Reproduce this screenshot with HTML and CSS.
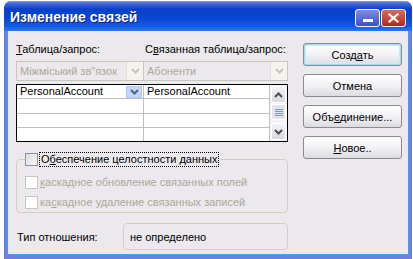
FILE: index.html
```html
<!DOCTYPE html>
<html lang="ru">
<head>
  <meta charset="UTF-8" />
  <title>Изменение связей</title>
  <link rel="stylesheet" href="styles.css">
</head>
<body>
  <div class="window">
    <div class="titlebar">
      <span class="title">Изменение связей</span>
      <div class="caption-btns">
        <span class="cap-btn cap-min"><span class="min-bar"></span></span>
        <span class="cap-btn cap-close">
          <svg width="11" height="10" viewBox="0 0 11 10"><path d="M1.5 1.5 L9.5 8.5 M9.5 1.5 L1.5 8.5" stroke="#fff" stroke-width="2.2" stroke-linecap="square"/></svg>
        </span>
      </div>
    </div>

    <div class="client">
      <div class="main">
        <div class="labels">
          <span class="lbl lbl-left"><u>Т</u>аблица/запрос:</span>
          <span class="lbl">С<u>в</u>язанная таблица/запрос:</span>
        </div>

        <div class="combos">
          <div class="combo combo-left">
            <span class="combo-text">Міжміський зв"язок</span>
            <span class="combo-btn">
              <svg width="9" height="6" viewBox="0 0 9 6"><path d="M1 1 L4.5 4.5 L8 1" fill="none" stroke="#c5c3b8" stroke-width="2"/></svg>
            </span>
          </div>
          <div class="combo combo-right">
            <span class="combo-text">Абоненти</span>
            <span class="combo-btn">
              <svg width="9" height="6" viewBox="0 0 9 6"><path d="M1 1 L4.5 4.5 L8 1" fill="none" stroke="#c5c3b8" stroke-width="2"/></svg>
            </span>
          </div>
        </div>

        <div class="grid">
          <div class="cells">
            <div class="cell cell-active">PersonalAccount
              <span class="cell-btn">
                <svg width="9" height="6" viewBox="0 0 9 6"><path d="M1 1 L4.5 4.5 L8 1" fill="none" stroke="#4d6185" stroke-width="2"/></svg>
              </span>
            </div>
            <div class="cell">PersonalAccount</div>
            <div class="cell"></div>
            <div class="cell"></div>
            <div class="cell"></div>
            <div class="cell"></div>
            <div class="cell"></div>
            <div class="cell"></div>
          </div>
          <div class="scrollbar">
            <span class="sb-btn">
              <svg width="9" height="6" viewBox="0 0 9 6"><path d="M1 5 L4.5 1.5 L8 5" fill="none" stroke="#4d4d4d" stroke-width="2"/></svg>
            </span>
            <span class="sb-thumb"><span class="grip"></span></span>
            <span class="sb-track"></span>
            <span class="sb-btn">
              <svg width="9" height="6" viewBox="0 0 9 6"><path d="M1 1 L4.5 4.5 L8 1" fill="none" stroke="#4d4d4d" stroke-width="2"/></svg>
            </span>
          </div>
        </div>

        <fieldset class="group">
          <legend class="check check-main">
            <span class="box box-on"></span>
            <span class="focus">О<u>б</u>еспечение целостности данных</span>
          </legend>
          <div class="check check-off">
            <span class="box"></span>
            <span><u>к</u>аскадное обновление связанных полей</span>
          </div>
          <div class="check check-off">
            <span class="box"></span>
            <span>ка<u>с</u>кадное удаление связанных записей</span>
          </div>
        </fieldset>

        <div class="relation">
          <span class="rel-label">Тип отношения:</span>
          <span class="rel-box">не определено</span>
        </div>
      </div>

      <div class="buttons">
        <span class="btn btn-default">Созд<u>а</u>ть</span>
        <span class="btn">Отмена</span>
        <span class="btn">Объ<u>е</u>динение...</span>
        <span class="btn"><u>Н</u>овое..</span>
      </div>
    </div>
  </div>
</body>
</html>
```

FILE: styles.css
```css
body {
  margin: 0;
  background: #fff;
  font-family: 'Liberation Sans', sans-serif;
  font-size: 11px;
  color: #000;
  white-space: nowrap;
}

.window {
  margin: 1px 0 0 4px;
  width: 408px;
  height: 258px;
  box-sizing: border-box;
  display: flex;
  flex-direction: column;
  background: #6f7fe0;
  border-radius: 7px 7px 0 0;
  padding: 0 4px 4px;
}

.titlebar {
  height: 30px;
  margin: 0 -4px;
  padding: 0 6px 0 6px;
  display: flex;
  align-items: center;
  justify-content: space-between;
  border-radius: 7px 7px 0 0;
  background: linear-gradient(#8a9be8 0, #4a6fdc 2px, #0a3fc8 8px, #0848d4 18px, #1660e8 26px, #2a78f2 30px);
}

.title {
  font-family: 'Liberation Sans', sans-serif;
  font-weight: bold;
  font-size: 14px;
  color: #fff;
  text-shadow: 1px 1px 0 #0a1e78;
  margin-top: 2px;
}

.caption-btns {
  display: flex;
  gap: 1px;
  margin-top: 4px;
}

.cap-btn {
  width: 23px;
  height: 16px;
  border: 1px solid #fff;
  border-radius: 3px;
  display: flex;
  align-items: center;
  justify-content: center;
}

.cap-min {
  background: linear-gradient(#7c8ce8, #3a52c8);
}

.min-bar {
  width: 10px;
  height: 3px;
  background: #fff;
  margin-top: 5px;
}

.cap-close {
  background: linear-gradient(#d86c5a, #b22a1a);
}

.client {
  flex: 1;
  background: #ebe9ed;
  display: flex;
  padding: 12px 0 0 8px;
  gap: 15px;
  border-left: 1px solid #38a4f8;
  border-right: 1px solid #38a4f8;
  border-bottom: 1px solid #38a4f8;
  margin: 0 -1px;
}

.main {
  width: 272px;
  display: flex;
  flex-direction: column;
}

.labels {
  display: flex;
  height: 13px;
  line-height: 13px;
}

.lbl-left {
  width: 129px;
}

.combos {
  display: flex;
  margin-top: 5px;
  height: 20px;
}

.combo {
  display: flex;
  align-items: center;
  justify-content: space-between;
  border: 1px solid #c9c7ba;
  background: #ebe9ed;
  color: #aca899;
  box-sizing: border-box;
  padding: 0 0 0 3px;
  overflow: hidden;
}

.combo-left {
  width: 128px;
}

.combo-right {
  width: 144px;
  border-left: none;
}

.combo-btn {
  width: 16px;
  height: 18px;
  flex: none;
  display: flex;
  align-items: center;
  justify-content: center;
  background: #f4f3ee;
  border-left: 1px solid #e3e1da;
}

.grid {
  margin-top: 3px;
  height: 58px;
  box-sizing: border-box;
  border: 1px solid #000;
  display: flex;
  background: #fff;
}

.cells {
  display: grid;
  grid-template-columns: 126px 125px;
  grid-template-rows: 13px 14px 13px 13px;
  gap: 1px;
  background: #c0c0c0;
  border-right: 1px solid #c0c0c0;
}

.cell {
  background: #fff;
  padding-left: 3px;
  line-height: 13px;
  display: flex;
  justify-content: space-between;
  align-items: center;
}

.cell-btn {
  width: 16px;
  height: 12px;
  margin-right: 1px;
  background: #c4d5fa;
  border: 1px solid #b2c7f2;
  box-sizing: border-box;
  display: flex;
  align-items: center;
  justify-content: center;
}

.scrollbar {
  flex: 1;
  display: flex;
  flex-direction: column;
  background: #f4f3f5;
  padding: 1px 0;
  gap: 1px;
}

.sb-btn {
  height: 17px;
  margin: 0 1px;
  border: 1px solid #fff;
  border-radius: 2px;
  background: linear-gradient(#f3f2f5, #d9d8e0);
  box-sizing: border-box;
  display: flex;
  align-items: center;
  justify-content: center;
}

.sb-thumb {
  height: 16px;
  margin: 0 1px;
  border: 1px solid #fff;
  border-radius: 2px;
  background: #e4e3ea;
  box-sizing: border-box;
  display: flex;
  align-items: center;
  justify-content: center;
}

.grip {
  width: 8px;
  height: 7px;
  background: repeating-linear-gradient(#7f95b8 0, #7f95b8 1px, transparent 1px, transparent 2px);
}

.sb-track {
  flex: 1;
}

.group {
  margin: 11px 0 0;
  padding: 2px 0 4px 8px;
  border: 1px solid #d0d0bf;
  border-radius: 4px;
  height: 60px;
  box-sizing: border-box;
}

.check {
  display: flex;
  align-items: center;
  gap: 2px;
  height: 13px;
  line-height: 13px;
}

.check-main {
  padding: 0 2px 0 0;
}

.check-off {
  color: #aca899;
  margin-top: 7px;
}

.group .check-off:first-of-type {
  margin-top: 8px;
}

.box {
  width: 13px;
  height: 13px;
  box-sizing: border-box;
  border: 1px solid #cac8bb;
  background: #fff;
}

.box-on {
  border-color: #8f8f9c;
  background: linear-gradient(135deg, #dcdce0, #f6f6f8);
}

.focus {
  outline: 1px dotted #000;
  padding: 0 1px;
}

.relation {
  display: flex;
  align-items: center;
  margin-top: 10px;
}

.rel-label {
  width: 106px;
  padding-left: 1px;
}

.rel-box {
  flex: 1;
  height: 27px;
  box-sizing: border-box;
  border: 1px solid #d0d0bf;
  border-radius: 4px;
  padding-left: 6px;
  display: flex;
  align-items: center;
}

.buttons {
  width: 99px;
  display: flex;
  flex-direction: column;
  gap: 8px;
}

.btn {
  height: 23px;
  box-sizing: border-box;
  border: 1px solid #8a8a90;
  border-radius: 3px;
  background: linear-gradient(#ffffff, #f2f1f4 50%, #dcdbe2);
  display: flex;
  align-items: center;
  justify-content: center;
}

.btn-default {
  box-shadow: inset 0 0 0 1px #9fdcf6, inset 0 0 0 2px #c8ecfb;
}
```
